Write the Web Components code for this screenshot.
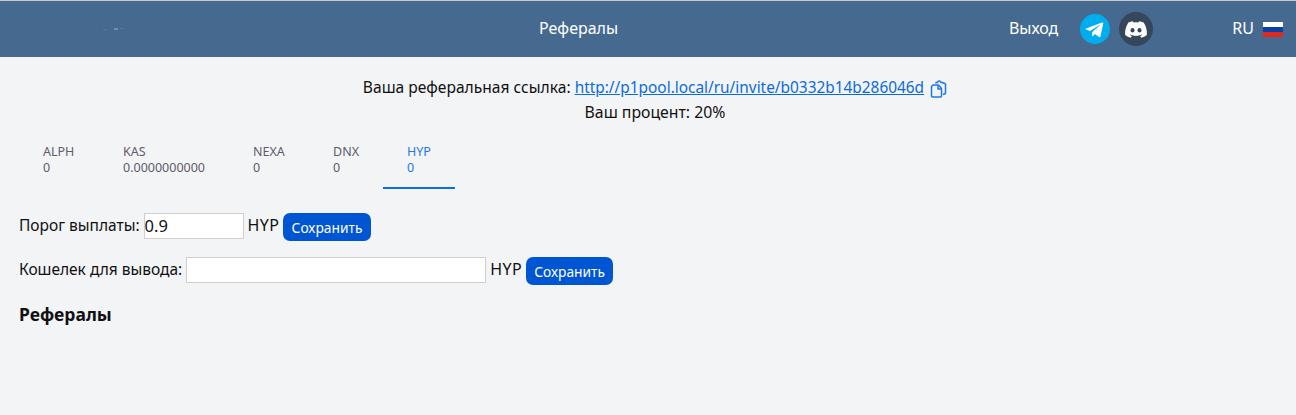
<!DOCTYPE html>
<html lang="ru">
<head>
<meta charset="utf-8">
<title>Рефералы</title>
<style>
  html, body { margin: 0; padding: 0; background: #f3f4f6; }
  body { font-family: "Noto Sans", "Open Sans", sans-serif; color: #111; font-size: 15.5px; }
</style>
</head>
<body>
<app-header></app-header>
<referral-info></referral-info>
<coin-tabs></coin-tabs>
<setting-row label="Порог выплаты:" value="0.9" width="100"></setting-row>
<setting-row label="Кошелек для вывода:" value="" width="300"></setting-row>
<section-title>Рефералы</section-title>

<script>
class AppHeader extends HTMLElement {
  constructor() {
    super();
    const shadow = this.attachShadow({ mode: "open" });
    shadow.innerHTML = `
      <style>
        :host { display: block; height: 56px; background: #466a8f; border-top: 1px solid #c9c9c9; color: #fff; font-size: 16px; }
        .bar { display: flex; align-items: center; height: 56px; }
        .logo { width: 22px; height: 4px; margin-left: 103px; display: block; }
        .title { margin-left: 414px; padding-bottom: 2px; }
        .right { display: flex; align-items: center; margin-left: auto; padding-right: 13px; }
        .text { padding-bottom: 2px; }
        .logout { margin-right: 22px; }
        .tg { width: 30px; height: 30px; margin-right: 9px; display: block; }
        .dc { width: 34px; height: 34px; margin-right: 79px; display: block; }
        .flag { width: 20px; height: 15px; margin-left: 9px; display: block; }
      </style>
      <div class="bar">
        <svg class="logo" viewBox="0 0 22 4">
          <rect x="0" y="2" width="4" height="1" fill="#56789b"/>
          <rect x="11" y="1" width="4" height="2" fill="#7590ad"/>
          <rect x="17" y="1" width="4" height="1" fill="#56789b"/>
        </svg>
        <span class="title">Рефералы</span>
        <div class="right">
          <span class="logout text">Выход</span>
          <svg class="tg" viewBox="0 0 30 30">
            <circle cx="15" cy="15" r="15" fill="#00aeef"/>
            <path d="M6.200 14.600 22 8.500c.8-.3 1.400.2 1.200 1.200l-2.700 12.600c-.2.9-.8 1.100-1.500.7l-4.100-3-2 1.900c-.3.3-.5.4-.9.4l.3-4.200 7.600-6.900c.3-.3 0-.4-.4-.2l-9.400 5.900-4-1.300c-.9-.2-.9-.8.100-1.200z" fill="#fff"/>
          </svg>
          <svg class="dc" viewBox="0 0 34 34">
            <circle cx="17" cy="17" r="17" fill="#36465d"/>
            <path d="M24.600 10.600a18 18 0 0 0-4.500-1.400l-.6 1.200a17 17 0 0 0-5 0l-.6-1.200a18 18 0 0 0-4.500 1.400C6.600 14.800 5.800 19 6.200 23a18 18 0 0 0 5.500 2.800l1.200-1.900a12 12 0 0 1-1.900-.9l.5-.4a13 13 0 0 0 11 0l.5.4a12 12 0 0 1-1.900.9l1.200 1.900a18 18 0 0 0 5.500-2.800c.5-4.700-.8-8.800-3.200-12.400z" fill="#fff"/>
            <ellipse cx="13.500" cy="18.300" rx="2" ry="2.200" fill="#36465d"/>
            <ellipse cx="20.500" cy="18.300" rx="2" ry="2.200" fill="#36465d"/>
          </svg>
          <span class="text">RU</span>
          <svg class="flag" viewBox="0 0 20 15">
            <rect width="20" height="5" fill="#fff"/>
            <rect y="5" width="20" height="5" fill="#0a3fa6"/>
            <rect y="10" width="20" height="5" fill="#e0281e"/>
          </svg>
        </div>
      </div>`;
  }
}
customElements.define("app-header", AppHeader);

class ReferralInfo extends HTMLElement {
  constructor() {
    super();
    const shadow = this.attachShadow({ mode: "open" });
    shadow.innerHTML = `
      <style>
        :host { display: block; padding: 18px 0 0 14px; text-align: center; line-height: 25px; font-size: 15.600px; }
        a { color: #0b6bdc; text-decoration: underline; font-size: 15.400px; }
        svg { width: 17px; height: 18px; vertical-align: -5px; margin-left: 2px; }
        .percent { font-size: 15.800px; }
      </style>
      <div>Ваша реферальная ссылка: <a href="#">http://p1pool.local/ru/invite/b0332b14b286046d</a>
        <svg viewBox="0 0 17 18" fill="none" stroke="#1f78e0" stroke-width="1.500" stroke-linejoin="round">
          <path d="M6 3.500V2.500h1.500a1.800 1.800 0 0 1 3.500 0h1.500l3 1.500v9.500l-2.500 1"/>
          <path d="M1.500 6.500 3 5h5.500l3 3.500V16a1 1 0 0 1-1 1H2.500a1 1 0 0 1-1-1z"/>
          <path d="M8 5.500v3.500h3.500"/>
        </svg>
      </div>
      <div class="percent">Ваш процент: 20%</div>`;
  }
}
customElements.define("referral-info", ReferralInfo);

class CoinTabs extends HTMLElement {
  constructor() {
    super();
    const shadow = this.attachShadow({ mode: "open" });
    const coins = [
      { name: "ALPH", value: "0", width: 80 },
      { name: "KAS", value: "0.0000000000", width: 130 },
      { name: "NEXA", value: "0", width: 80 },
      { name: "DNX", value: "0", width: 74 },
      { name: "HYP", value: "0", width: 72, active: true },
    ];
    shadow.innerHTML = `
      <style>
        :host { display: flex; padding: 16px 0 0 19px; margin-bottom: 24px; font-size: 12.500px; color: #5f5b6b; }
        .tab { box-sizing: border-box; height: 48px; padding: 3px 0 0 24px; line-height: 15.500px; }
        .tab.active { color: #1f78e0; border-bottom: 2px solid #0b6fe8; }
      </style>
      ${coins
        .map(
          (c) => `<div class="tab${c.active ? " active" : ""}" style="width:${c.width}px">
            <div>${c.name}</div><div>${c.value}</div></div>`
        )
        .join("")}`;
  }
}
customElements.define("coin-tabs", CoinTabs);

class SettingRow extends HTMLElement {
  constructor() {
    super();
    const shadow = this.attachShadow({ mode: "open" });
    shadow.innerHTML = `
      <style>
        :host { display: flex; align-items: flex-start; height: 28px; margin: 0 0 16px 19px; font-size: 15.500px; line-height: 25px; }
        input { box-sizing: border-box; height: 26px; margin: 0 4px; padding: 0 0 2px; border: 1px solid #cfcfcf; background: #fff; font: inherit; font-size: 16.500px; color: #111; outline: none; }
        .unit { font-size: 16px; letter-spacing: .4px; }
        button { height: 28px; margin-left: 4px; padding: 0 8.200px; border: 0; border-radius: 7px; background: #0056d2; color: #fff; font: inherit; font-size: 13.800px; }
      </style>
      <span class="label"></span>
      <input type="text">
      <span class="unit">HYP</span>
      <button type="button">Сохранить</button>`;
  }
  connectedCallback() {
    this.shadowRoot.querySelector(".label").textContent = this.getAttribute("label") || "";
    const input = this.shadowRoot.querySelector("input");
    input.setAttribute("value", this.getAttribute("value") || "");
    input.style.width = (this.getAttribute("width") || "100") + "px";
  }
}
customElements.define("setting-row", SettingRow);

class SectionTitle extends HTMLElement {
  constructor() {
    super();
    const shadow = this.attachShadow({ mode: "open" });
    shadow.innerHTML = `
      <style>
        :host { display: block; margin: 17px 0 0 19px; font-size: 17.500px; font-weight: 700; line-height: 24px; }
      </style>
      <slot></slot>`;
  }
}
customElements.define("section-title", SectionTitle);
</script>
</body>
</html>
